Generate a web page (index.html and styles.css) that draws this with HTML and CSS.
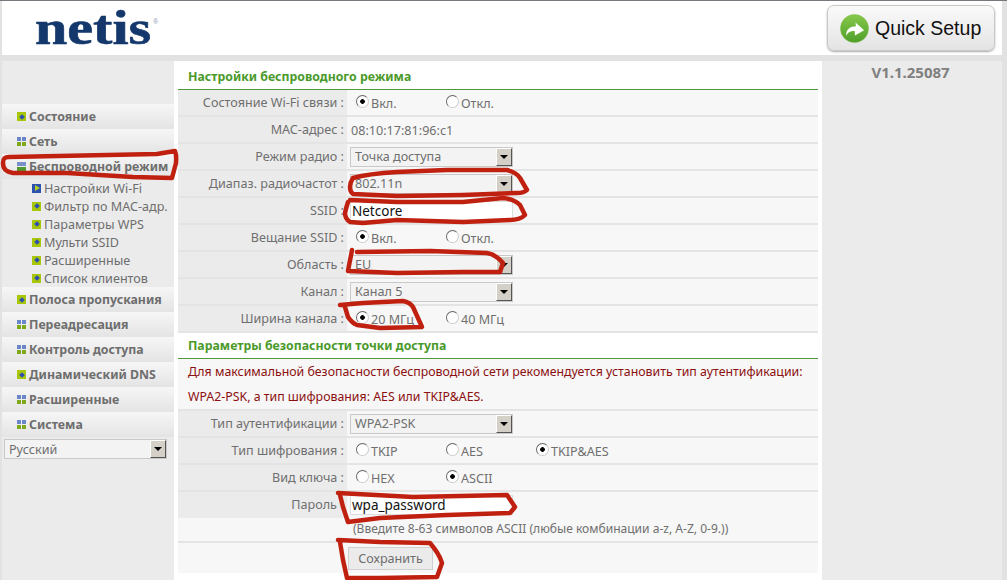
FILE: index.html
```html
<!DOCTYPE html>
<html lang="ru">
<head>
<meta charset="utf-8">
<title>netis</title>
<link rel="stylesheet" href="styles.css">
</head>
<body>
<div class="page">
  <header class="header">
    <div class="logo"><span class="logo-word">netis</span><span class="reg">®</span></div>
    <button class="quick">
      <svg class="quick-icon" viewBox="0 0 30 30"><defs><linearGradient id="g" x1="0" y1="0" x2="0" y2="1"><stop offset="0" stop-color="#86c94a"/><stop offset="1" stop-color="#4f9e2a"/></linearGradient></defs><circle cx="15" cy="15" r="14.5" fill="url(#g)" stroke="#7dbb44" stroke-width=".5"/><path d="M6.5 22.5c-.5-6 3-9.500 10-9.800l-.5-4 9 8-9.500 5.500-.3-4.500c-4.700 0-6.500 1-8.700 4.800z" fill="#fff"/></svg>
      <span>Quick Setup</span>
    </button>
  </header>
  <div class="main">
    <nav class="side">
      <div class="m"><i class="ic d"></i>Состояние</div>
      <div class="m"><i class="ic q"></i>Сеть</div>
      <div class="m"><i class="ic o"></i>Беспроводной режим</div>
      <div class="s"><i class="ic a"></i>Настройки Wi-Fi</div>
      <div class="s"><i class="ic d"></i>Фильтр по MAC-адр.</div>
      <div class="s"><i class="ic d"></i>Параметры WPS</div>
      <div class="s"><i class="ic d"></i>Мульти SSID</div>
      <div class="s"><i class="ic d"></i>Расширенные</div>
      <div class="s"><i class="ic d"></i>Список клиентов</div>
      <div class="m"><i class="ic d"></i>Полоса пропускания</div>
      <div class="m"><i class="ic q"></i>Переадресация</div>
      <div class="m"><i class="ic q"></i>Контроль доступа</div>
      <div class="m"><i class="ic d"></i>Динамический DNS</div>
      <div class="m"><i class="ic q"></i>Расширенные</div>
      <div class="m"><i class="ic q"></i>Система</div>
      <div class="sel lang"><span>Русский</span><b></b></div>
    </nav>
    <section class="content">
      <h2>Настройки беспроводного режима</h2>
      <div class="row"><label>Состояние Wi-Fi связи :</label><div class="v"><span class="r w90 on">Вкл.</span><span class="r">Откл.</span></div></div>
      <div class="row"><label>MAC-адрес :</label><div class="v mac">08:10:17:81:96:c1</div></div>
      <div class="row"><label>Режим радио :</label><div class="v"><div class="sel"><span>Точка доступа</span><b></b></div></div></div>
      <div class="row"><label>Диапаз. радиочастот :</label><div class="v"><div class="sel"><span>802.11n</span><b></b></div></div></div>
      <div class="row"><label>SSID :</label><div class="v"><div class="inp">Netcore</div></div></div>
      <div class="row"><label>Вещание SSID :</label><div class="v"><span class="r w90 on">Вкл.</span><span class="r">Откл.</span></div></div>
      <div class="row"><label>Область :</label><div class="v"><div class="sel"><span>EU</span><b></b></div></div></div>
      <div class="row"><label>Канал :</label><div class="v"><div class="sel"><span>Канал 5</span><b></b></div></div></div>
      <div class="row"><label>Ширина канала :</label><div class="v"><span class="r w90 on">20 МГц</span><span class="r">40 МГц</span></div></div>
      <h2 class="second">Параметры безопасности точки доступа</h2>
      <p class="warn">Для максимальной безопасности беспроводной сети рекомендуется установить тип аутентификации:</p>
      <p class="warn last">WPA2-PSK, а тип шифрования: AES или TKIP&amp;AES.</p>
      <div class="row"><label>Тип аутентификации :</label><div class="v"><div class="sel"><span>WPA2-PSK</span><b></b></div></div></div>
      <div class="row"><label>Тип шифрования :</label><div class="v"><span class="r w90">TKIP</span><span class="r w90">AES</span><span class="r on">TKIP&amp;AES</span></div></div>
      <div class="row"><label>Вид ключа :</label><div class="v"><span class="r w90">HEX</span><span class="r on">ASCII</span></div></div>
      <div class="row pwrow"><label class="pw">Пароль</label><div class="v"><div class="inp">wpa_password</div></div></div>
      <div class="hint">(Введите 8-63 символов ASCII (любые комбинации a-z, A-Z, 0-9.))</div>
      <div class="save"><button class="btn">Сохранить</button></div>
    </section>
    <aside class="ver">V1.1.25087</aside>
  </div>
  <svg class="marks" viewBox="0 0 1007 580" fill="none" stroke="#c0200f" stroke-width="4.500" stroke-linecap="round" stroke-linejoin="round">
    <path d="M3 163C3 158 5 157 9 157L157 154 175 151C177 156 176 158 176 163L172 178 133 177 67 173 13 173C7 172 3 170 3 163"/>
    <path d="M353 178C360 176 380 173 397 172L447 170 507 170C515 172 518 175 520 178L527 190C525 192 521 193 517 193L463 195 397 196 353 194C350 192 350 188 350 187 350 184 351 181 353 178"/>
    <path d="M350 200L397 202 463 202 503 198C513 199 518 203 520 205L525 215C522 218 516 220 510 220L463 222 397 220 363 223 350 222C347 220 345 216 345 213 346 208 347 205 348 202"/>
    <path d="M352 250C351 256 349 265 348 271L397 273 463 272 500 272 503 263C498 257 493 254 487 253L430 251 357 252"/>
    <path d="M340 305L363 303 403 301C408 302 411 304 413 307L422 327 380 328 357 325C352 323 350 320 348 317L345 307"/>
    <path d="M338 493L413 497 507 495 515 507 510 513 447 515 380 518 348 522 343 507 340 495"/>
    <path d="M338 540L380 542 430 543C436 550 440 556 442 563L437 577 380 578 347 578 343 560 340 542"/>
  </svg>
</div>
</body>
</html>
```
FILE: styles.css
```css
* { box-sizing: border-box; }
html, body { margin: 0; padding: 0; }
body { background: #e2e2e2; font-family: "Noto Sans", Tahoma, sans-serif; font-size: 12.600px; color: #6f6f6f; overflow: hidden; }
.page { position: relative; width: 1007px; height: 580px; overflow: hidden; border-top: 1px solid #77777d; padding-left: 2px; }
.header { width: 1000px; height: 54px; background: #fff; display: flex; justify-content: space-between; align-items: flex-start; }
.logo { position: relative; height: 54px; padding-left: 33px; font-family: "Liberation Serif", serif; font-weight: 700; font-size: 48px; line-height: 54px; color: #14386b; }
.logo-word { display: inline-block; width: 118px; transform: scaleX(1.210); transform-origin: left center; -webkit-text-stroke: .6px #14386b; }
.reg { position: absolute; left: 151px; top: 17px; font-family: "Liberation Sans", sans-serif; font-weight: 400; font-size: 7px; line-height: 8px; color: #8a9ab0; }
.quick { margin: 4px 7px 0 0; width: 168px; height: 46px; border: 1px solid #c8c8c8; border-radius: 7px; background: linear-gradient(#fafafa, #e4e4e4); box-shadow: 0 1px 2px #aaa; display: flex; align-items: center; gap: 6px; padding: 0 0 0 12px; font-family: "Liberation Sans", sans-serif; font-size: 19.500px; color: #111; }
.quick-icon { width: 29px; height: 29px; flex: none; }
.main { display: flex; height: 525px; border-top: 6px solid #e2e2e2; width: 1000px; background: #fff; }
.side { width: 172px; flex: none; background: #ebebeb; padding-top: 43px; }
.m { height: 25px; display: flex; align-items: center; padding-left: 15px; font-weight: 700; font-size: 12.350px; color: #6e6e6e; background: linear-gradient(#f6f6f6, #e4e4e4); }
.s { height: 18px; display: flex; align-items: center; padding-left: 30px; font-size: 12.600px; color: #6e6e6e; }
.ic { position: relative; width: 9px; height: 9px; flex: none; margin-right: 3px; display: block; }
.d { background: #a8c60a; }
.d::after { content: ""; position: absolute; left: 2.500px; top: 2.500px; width: 4px; height: 4px; background: #2f4fb0; transform: rotate(45deg); }
.q { background: linear-gradient(90deg, #6a86c8 0 4px, transparent 4px 5px, #6a86c8 5px) top/100% 4px no-repeat, linear-gradient(90deg, #7fa81a 0 4px, transparent 4px 5px, #7fa81a 5px) bottom/100% 4px no-repeat; }
.o { background: linear-gradient(#7a90c8 0 4px, transparent 4px 5px, #4e9a2e 5px); }
.a { background: #2c52b0; }
.a::after { content: ""; position: absolute; left: 3px; top: 1px; border-left: 5px solid #b8d020; border-top: 3.500px solid transparent; border-bottom: 3.500px solid transparent; }
.content { width: 640px; flex: none; margin: 0 4px; align-self: flex-start; background: #fff; }
h2 { margin: 0; height: 29px; padding: 4px 0 0 10px; font-size: 12.300px; line-height: 24px; font-weight: 700; color: #4a9a2a; border-bottom: 1px solid #4e9a38; }
h2.second { height: 26px; padding-top: 1px; }
.row { display: flex; height: 27px; border-bottom: 2px solid #e4e4e4; background: #f7f7f7; }
.row label { width: 169px; flex: none; background: #ebebeb; text-align: right; padding-right: 3px; line-height: 26px; }
.row label.pw { padding-right: 10px; }
.pwrow { height: 26px; border-bottom: 0; }
.v { flex: 1; display: flex; align-items: center; padding-left: 3px; }
.mac { padding-left: 4px; padding-top: 1px; }
.r { display: inline-flex; align-items: center; gap: 2px; padding-left: 6px; padding-top: 1px; }
.r::before { content: ""; width: 11px; height: 11px; border-radius: 50%; border: 1px solid #666; border-bottom-color: #ccc; border-right-color: #ccc; background: #fff; flex: none; margin-top: -3px; }
.r.on::before { background: radial-gradient(circle, #000 0 2px, #fff 2.600px); }
.w90 { width: 90px; }
.sel { width: 163px; height: 20px; display: flex; align-items: center; justify-content: space-between; border: 1px solid #c9c9c9; background: #f3f3f3; padding-left: 4px; }
.sel b { width: 16px; height: 18px; background: #d4d0c8; border: 1px solid; border-color: #fff #555 #555 #fff; position: relative; flex: none; }
.sel b::after { content: ""; position: absolute; left: 3px; top: 6px; border-top: 4px solid #000; border-left: 4px solid transparent; border-right: 4px solid transparent; }
.lang { margin: 2px 0 0 2px; }
.inp { width: 163px; height: 20px; background: #fff; border: 1px solid #ddd; padding-left: 1px; color: #111; font-size: 13.500px; line-height: 18px; }
.warn { margin: 0; height: 25px; line-height: 26px; padding-left: 10px; color: #8c1010; font-size: 12.350px; white-space: nowrap; background: #f7f7f7; }
.warn.last { height: 27px; border-bottom: 2px solid #e4e4e4; }
.hint { height: 25px; padding-left: 175px; line-height: 22px; font-size: 12.050px; background: #f7f7f7; border-bottom: 2px solid #e4e4e4; }
.save { height: 30px; padding: 4px 0 0 170px; background: #f7f7f7; }
.btn { display: block; width: 85px; height: 23px; background: #ebebeb; border: 1px solid #d0d0d0; color: #6e6e6e; font: inherit; padding: 0; }
.ver { width: 180px; flex: none; background: #ebebeb; font-weight: 700; font-size: 15px; line-height: 22px; padding-right: 3px; color: #80807f; text-align: center; }
.marks { position: absolute; left: 0; top: -1px; width: 1007px; height: 580px; pointer-events: none; }
```
